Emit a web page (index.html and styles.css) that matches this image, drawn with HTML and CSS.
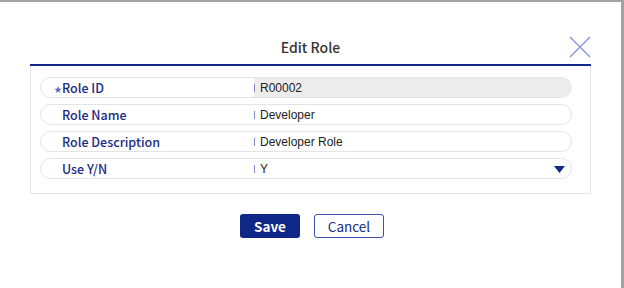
FILE: index.html
```html
<!DOCTYPE html>
<html lang="en">

<head>
    <meta charset="UTF-8">
    <meta name="viewport" content="width=device-width, initial-scale=1.0">
    <title>Edit Role</title>
    <link rel="stylesheet" href="styles.css">
</head>

<body>
    <div class="modal">
        <div class="modal-header">
            <h2>Edit Role</h2>
            <button class="close-btn" aria-label="Close">
                <svg width="22" height="22" viewBox="0 0 22 22">
                    <path d="M1 1 L21 21 M21 1 L1 21" stroke="#8793dc" stroke-width="1.4" fill="none" />
                </svg>
            </button>
        </div>

        <div class="form-box">
            <div class="form-row">
                <div class="form-label"><span class="required">★</span>Role ID</div>
                <div class="form-value readonly">R00002</div>
            </div>
            <div class="form-row">
                <div class="form-label">Role Name</div>
                <div class="form-value">Developer</div>
            </div>
            <div class="form-row">
                <div class="form-label">Role Description</div>
                <div class="form-value">Developer Role</div>
            </div>
            <div class="form-row">
                <div class="form-label">Use Y/N</div>
                <div class="form-value select">
                    <span>Y</span>
                    <svg class="caret" width="11" height="7" viewBox="0 0 11 7">
                        <path d="M0 0 L11 0 L5.5 7 Z" fill="#14288c" />
                    </svg>
                </div>
            </div>
        </div>

        <div class="modal-buttons">
            <button class="save-btn">Save</button>
            <button class="cancel-btn">Cancel</button>
        </div>
    </div>
</body>

</html>
```

FILE: styles.css
```css
body {
    margin: 0;
    background-color: #fff;
    font-family: 'Noto Sans CJK KR', 'Noto Sans', sans-serif;
}

.modal {
    width: 621px;
    height: 286px;
    border-top: 2px solid #a3a3a3;
    border-right: 3px solid #a3a3a3;
    background-color: #fff;
}

.modal-header {
    position: relative;
    margin: 0 30px 0 30px;
    padding-top: 34px;
    height: 28px;
    border-bottom: 2px solid #14288c;
}

.modal-header h2 {
    margin: 0;
    text-align: center;
    font-size: 14px;
    font-weight: 500;
    color: #333;
    line-height: 22px;
}

.close-btn {
    position: absolute;
    top: 34px;
    right: 0;
    background: none;
    border: none;
    padding: 0;
    cursor: pointer;
    display: flex;
}

.form-box {
    margin: 0 30px;
    border: 1px solid #e6e6e6;
    border-top: none;
    padding: 11px 18px 14px 9px;
    display: flex;
    flex-direction: column;
    gap: 6px;
}

.form-row {
    display: flex;
    align-items: stretch;
    height: 19px;
    border: 1px solid #e3e3e3;
    border-radius: 11px;
    overflow: hidden;
}

.form-label {
    width: 192px;
    padding-left: 21px;
    font-size: 12.5px;
    font-weight: 500;
    color: #1c2a80;
    line-height: 19px;
}

.required {
    display: inline-block;
    width: 8px;
    margin-left: -8px;
    font-size: 8px;
    vertical-align: 1px;
    color: #5a68b8;
}

.form-value {
    flex: 1;
    display: flex;
    align-items: center;
    padding-left: 6px;
    font-family: 'Liberation Sans', Arial, sans-serif;
    font-size: 12px;
    color: #222;
    position: relative;
}

.form-value::before {
    content: "";
    position: absolute;
    left: 0;
    top: 6px;
    width: 1px;
    height: 8px;
    background-color: #7f8cc8;
}

.form-value.readonly {
    background-color: #ececec;
}

.form-value.select {
    justify-content: space-between;
    padding-right: 6px;
}

.caret {
    margin-top: 1px;
}

.modal-buttons {
    display: flex;
    justify-content: center;
    gap: 14px;
    margin-top: 20px;
    padding-left: 3px;
}

.save-btn,
.cancel-btn {
    height: 24px;
    border-radius: 3px;
    font-family: 'Noto Sans CJK KR', 'Noto Sans', sans-serif;
    font-size: 13.5px;
    cursor: pointer;
    padding: 0;
}

.save-btn {
    width: 60px;
    background-color: #0f2786;
    color: #fff;
    border: none;
    font-weight: 700;
}

.cancel-btn {
    width: 70px;
    background-color: #fff;
    color: #1c2a80;
    border: 1px solid #3d50aa;
}
```
